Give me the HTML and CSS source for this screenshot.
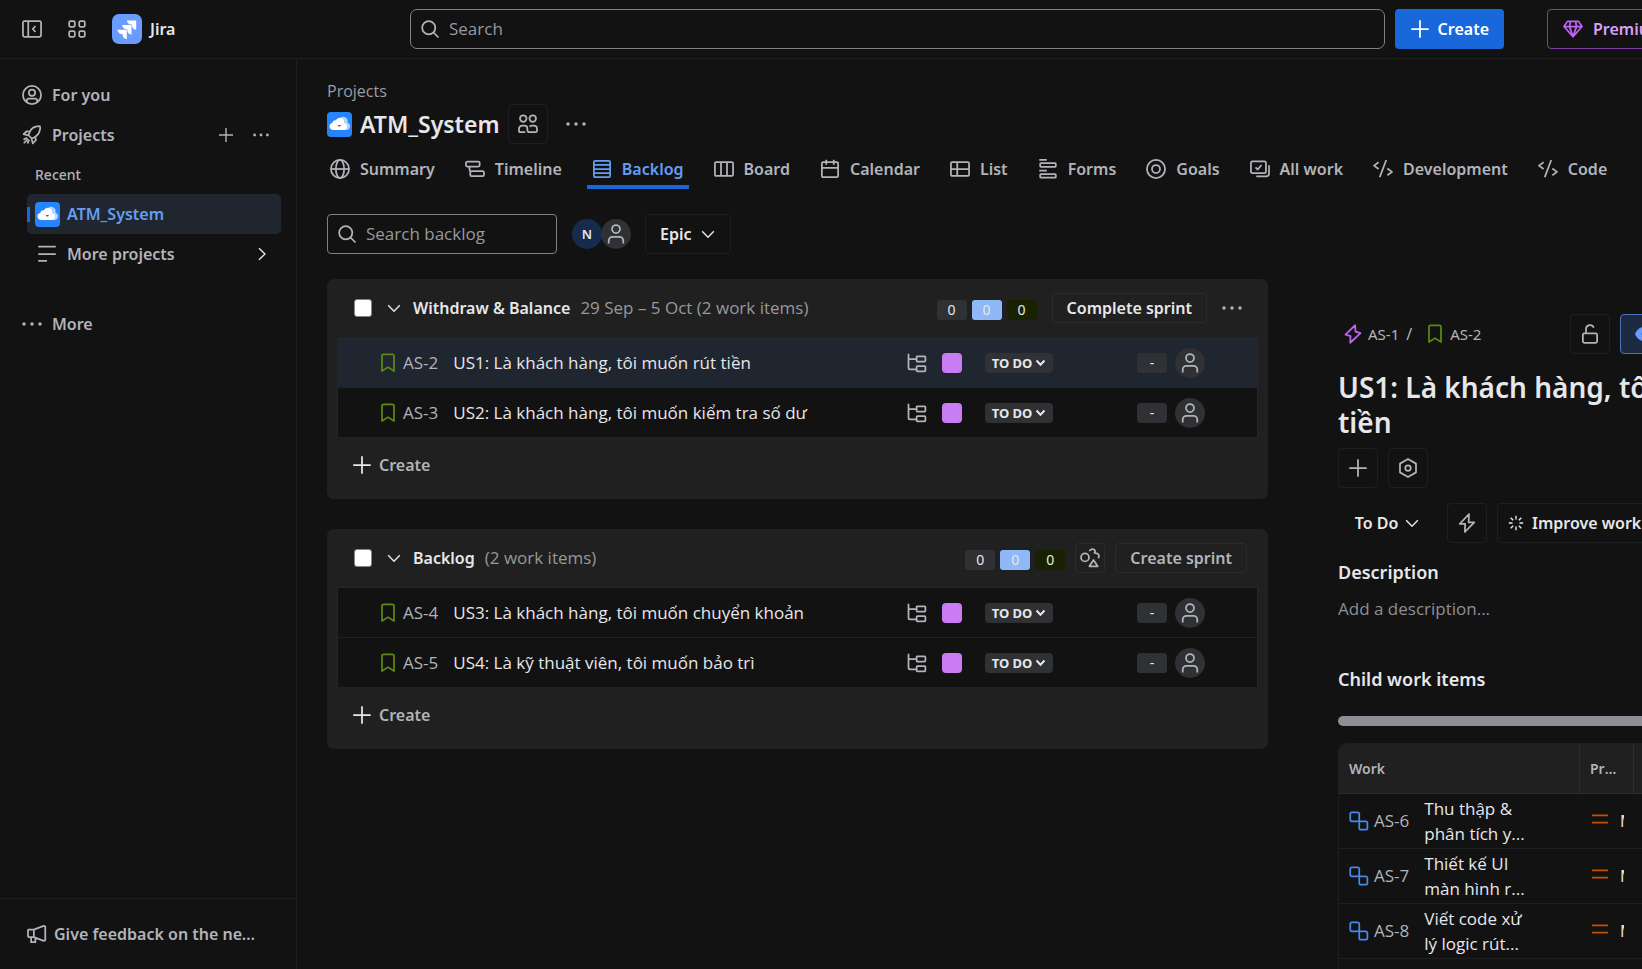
FILE: index.html
```html
<!DOCTYPE html>
<html lang="en">
<head>
<meta charset="utf-8">
<title>ATM_System - Backlog - Jira</title>
<link rel="stylesheet" href="styles.css">
</head>
<body>
<svg class="sprite" aria-hidden="true">
  <symbol id="i-collapse" viewBox="0 0 16 16"><rect x=".75" y="1.75" width="14.5" height="12.5" rx="1.2"/><path d="M5 2v12M10.8 5.6 8.6 8l2.2 2.4"/></symbol>
  <symbol id="i-apps" viewBox="0 0 16 16"><rect x="1.75" y="1.75" width="4.5" height="4.5" rx="1"/><rect x="9.75" y="1.75" width="4.5" height="4.5" rx="1"/><rect x="1.75" y="9.75" width="4.5" height="4.5" rx="1"/><rect x="9.75" y="9.75" width="4.5" height="4.5" rx="1"/></symbol>
  <symbol id="i-search" viewBox="0 0 16 16"><circle cx="7" cy="7" r="5.25"/><path d="m10.8 10.8 4 4"/></symbol>
  <symbol id="i-plus" viewBox="0 0 16 16"><path d="M8 1v14M1 8h14"/></symbol>
  <symbol id="i-dots" viewBox="0 0 16 16"><g fill="currentColor" stroke="none"><circle cx="1.6" cy="8" r="1.4"/><circle cx="8" cy="8" r="1.4"/><circle cx="14.4" cy="8" r="1.4"/></g></symbol>
  <symbol id="i-gem" viewBox="0 0 16 16"><path d="M3.6 1.9h8.8L15.2 6 8 14.2.8 6zM.8 6.1h14.4M5.2 6.1 8 14M10.8 6.1 8 14M5.2 6.1l.7-4M10.8 6.1l-.7-4"/></symbol>
  <symbol id="i-user-circle" viewBox="0 0 16 16"><circle cx="8" cy="8" r="7.25"/><circle cx="8" cy="6.2" r="2.5"/><path d="M3.8 13.6v-.9c0-1 .8-1.8 1.8-1.8h4.8c1 0 1.8.8 1.8 1.8v.9"/></symbol>
  <symbol id="i-rocket" viewBox="0 0 16 16"><path d="M5.2 8.200C6 5 8 2 11 1.300c1.200-.3 2.500-.4 3.400-.3.200 1.100.1 2.600-.3 3.800C13.300 7.600 10.600 9.800 7.800 10.800zM6.300 5.400 3.800 5 1.300 7.400l3.600.900M10.600 9.600l.500 2.600-2.500 2.500-.9-3.600M4.200 10.200l-3 1.500M5.800 11.800l-1.500 3M4.800 11.200l-3.400 3.400"/></symbol>
  <symbol id="i-lines" viewBox="0 0 16 16"><path d="M1 2h14M1 8h14M1 13.500h7"/></symbol>
  <symbol id="i-right" viewBox="0 0 16 16"><path d="m5 2.200 6 5.800-6 5.800"/></symbol>
  <symbol id="i-down" viewBox="0 0 16 16"><path d="M2.200 5.200 8 11.200l5.800-6"/></symbol>
  <symbol id="i-horn" viewBox="0 0 16 16"><path d="M1 4.500h4.500v6H1.700A.9.900 0 0 1 .8 9.600V5.200c0-.4.300-.7.700-.7zM5.500 4.500l7.800-3 1.300.5v11l-1.300.5-7.800-3M3.300 10.500v4h3.400v-3.300"/></symbol>
  <symbol id="i-people" viewBox="0 0 16 16"><circle cx="4.200" cy="3.600" r="2.600"/><circle cx="11.800" cy="3.600" r="2.600"/><path d="M.8 14.500v-2.200C.8 10.600 2 9.300 3.600 9.300h1.600c1.600 0 2.300 1 2.300 2.600v.8c0 1 .7 1.800 1.700 1.800h4.800c.7 0 1.200-.5 1.200-1.200v-1.400c0-1.600-1.200-2.600-2.800-2.600h-1c-1 0-1.600.3-2.100.9M.8 14.500h5"/></symbol>
  <symbol id="i-globe" viewBox="0 0 16 16"><circle cx="8" cy="8" r="7.250"/><ellipse cx="8" cy="8" rx="3.300" ry="7.250"/><path d="M.8 8h14.400"/></symbol>
  <symbol id="i-timeline" viewBox="0 0 16 16"><rect x=".75" y="2" width="11" height="4" rx="1.200"/><rect x="4.200" y="9.700" width="11" height="4" rx="1.200"/><path d="M3.600 6v2.600c0 .7.500 1.100 1.100 1.100"/></symbol>
  <symbol id="i-backlog" viewBox="0 0 16 16"><rect x="1.500" y="1.500" width="13" height="13" rx="1"/><path d="M1.500 4.700h13M1.500 8h13M1.500 11.300h13"/></symbol>
  <symbol id="i-board" viewBox="0 0 16 16"><rect x=".75" y="2.500" width="14.500" height="11" rx="1"/><path d="M5.600 2.500v11M10.400 2.500v11"/></symbol>
  <symbol id="i-calendar" viewBox="0 0 16 16"><rect x="1.500" y="2.500" width="13" height="12" rx="1"/><path d="M1.500 7h13M5 .5v4M11 .5v4"/></symbol>
  <symbol id="i-list" viewBox="0 0 16 16"><rect x=".75" y="2.500" width="14.500" height="11" rx="1"/><path d="M.75 8h14.500M5.800 2.500v11"/></symbol>
  <symbol id="i-forms" viewBox="0 0 16 16"><path d="M1 .75h6M1 9.200h6"/><rect x="1.750" y="3.300" width="12.500" height="2.900" rx=".6"/><rect x="1.750" y="12" width="12.500" height="2.900" rx=".6"/></symbol>
  <symbol id="i-goals" viewBox="0 0 16 16"><circle cx="8" cy="8" r="7.250"/><circle cx="8" cy="8" r="3.200"/></symbol>
  <symbol id="i-allwork" viewBox="0 0 16 16"><rect x=".75" y="1.800" width="12" height="9.500" rx="1.200"/><path d="m4.400 6.700 1.800 1.700 3-3.600M15.200 5v6.500c0 1.300-1 2.300-2.300 2.300H5"/></symbol>
  <symbol id="i-code" viewBox="0 0 16 16"><path d="M4.500 2.600.8 5.300l3.700 2.700M11.500 7.600l3.700 2.700-3.700 2.700M10.600.8 5.400 14.500"/></symbol>
  <symbol id="i-person" viewBox="0 0 16 16"><circle cx="8" cy="4" r="3.200"/><path d="M2.200 15.500v-2.300c0-1.700 1.300-3 3-3h5.600c1.700 0 3 1.300 3 3v2.300"/></symbol>
  <symbol id="i-story" viewBox="0 0 16 16"><path d="M3.200 14.400V2.300c0-.8.600-1.300 1.300-1.300h7c.7 0 1.300.5 1.300 1.300v12.100L8 11.300z"/></symbol>
  <symbol id="i-tree" viewBox="0 0 16 16"><path d="M1.200.6v11.200c0 .8.500 1.300 1.300 1.300h5M1.500 4.800h6"/><rect x="7.700" y="2.600" width="7" height="4.200" rx=".6"/><rect x="7.700" y="10.400" width="7" height="4.200" rx=".6"/></symbol>
  <symbol id="i-shapes" viewBox="0 0 16 16"><circle cx="4" cy="7.500" r="3.200"/><path d="M7.500 2.500C8.600.6 11 .4 11.800 1.800c.4.800.2 1.800-.6 2.400M12.300 4c2.600 0 3.400 2 2.400 4.200M10.800 9.600l3.300 5H7.500z"/></symbol>
  <symbol id="i-epic" viewBox="0 0 16 16"><path d="M9.700 1 2 8.500l4 1.200L5.800 15 14 7.300 10 6.100z"/></symbol>
  <symbol id="i-bolt" viewBox="0 0 16 16"><path d="M9.600.8 2.200 8.700h4.300L6.300 15.200l7.500-7.700H9.300z"/></symbol>
  <symbol id="i-unlock" viewBox="0 0 16 16"><rect x="2.300" y="7.500" width="11.400" height="7.500" rx="1.200"/><path d="M4.800 7.500V4A3.200 3.200 0 0 1 11 3"/></symbol>
  <symbol id="i-eye" viewBox="0 0 16 16"><path fill="currentColor" stroke="none" d="M8 2C4 2 1.300 5 0 8c1.300 3 4 6 8 6s6.700-3 8-6c-1.300-3-4-6-8-6z"/><circle cx="8" cy="8" r="2.600" fill="#1c2b41" stroke="none"/></symbol>
  <symbol id="i-hex" viewBox="0 0 16 16"><path d="M8 .8 14.400 4.500v7L8 15.200 1.600 11.500v-7z"/><circle cx="8" cy="8" r="2.200"/></symbol>
  <symbol id="i-spark" viewBox="0 0 16 16"><path d="M8 .8v3.700M8 11.500v3.700M.8 8h3.700M11.500 8h3.700M2.700 2.700l2.500 2.500M10.800 10.800l2.500 2.500M13.300 2.700l-2.500 2.500M5.200 10.800l-2.500 2.500"/></symbol>
  <symbol id="i-subtask" viewBox="0 0 16 16"><rect x="1" y="1" width="7.200" height="7.200" rx="1.400"/><path d="M8.200 8.200h5.100c.8 0 1.400.6 1.400 1.400v3.900c0 .8-.6 1.400-1.400 1.400H9.600c-.8 0-1.400-.6-1.400-1.400V8.200"/></symbol>
  <symbol id="i-medium" viewBox="0 0 16 16"><path d="M1.500 5h13M1.500 10.800h13"/></symbol>
  <symbol id="i-jira" viewBox="0 0 30 30"><g fill="#fff" stroke="none"><path id="jira-arm" d="M24.200 6.400h-9.300a4.200 4.200 0 0 0 4.200 4.200h.9v.9a4.200 4.200 0 0 0 4.200 4.200z"/><path d="M19.500 11.100h-9.300a4.200 4.200 0 0 0 4.200 4.200h.9v.9a4.200 4.200 0 0 0 4.200 4.200z"/><path d="M14.800 15.800H5.500a4.200 4.200 0 0 0 4.200 4.200h.9v.9a4.200 4.200 0 0 0 4.200 4.200z"/></g></symbol>
  <symbol id="i-cloud" viewBox="0 0 25 25"><g stroke="none"><rect width="25" height="25" rx="4" fill="#2684ff"/><path fill="#b3d4ff" d="M12 8.500A5 5 0 0 1 14.500 5a4.800 4.800 0 0 1 6.200 5.700 3.800 3.800 0 0 1-1 7.300H13z"/><path fill="#fff" d="M6.200 18a3.600 3.600 0 0 1-.9-7.100c.3-1.800 2-2.900 3.700-2.500C10 5.600 13.500 4.800 15.700 6.800c1.300 1.200 1.600 2.700 1.300 4.200 2.200.2 3.200 1.900 3 3.700-.2 2-1.600 3.300-3.400 3.300z"/><path fill="#de350b" d="M10.800 12.900h3c-.1 1.100-.7 1.600-1.500 1.600s-1.400-.5-1.500-1.600z"/><path fill="#b8bfca" d="M8.500 12h1v.6h-1zM15 12h1v.6h-1z"/></g></symbol>
</svg>

<header class="topbar">
  <div class="topbar-left">
    <button class="plain" aria-label="Collapse sidebar"><svg class="icon"><use href="#i-collapse"/></svg></button>
    <button class="plain" aria-label="Switch apps"><svg class="icon"><use href="#i-apps"/></svg></button>
    <a class="brand" href="#"><span class="brand-mark"><svg><use href="#i-jira"/></svg></span>Jira</a>
  </div>
  <label class="search global-search"><svg class="icon"><use href="#i-search"/></svg><input type="text" placeholder="Search" aria-label="Search"></label>
  <button class="primary"><svg class="icon"><use href="#i-plus"/></svg>Create</button>
  <div class="topbar-right"><button class="premium"><svg class="icon"><use href="#i-gem"/></svg>Premium trial</button></div>
</header>

<div class="shell">
  <nav class="sidebar" aria-label="Sidebar">
    <div class="side-list">
      <a class="side-item" href="#"><svg class="icon"><use href="#i-user-circle"/></svg>For you</a>
      <div class="side-item">
        <svg class="icon"><use href="#i-rocket"/></svg><a href="#">Projects</a>
        <span class="side-actions">
          <button class="plain" aria-label="Create project"><svg class="icon small"><use href="#i-plus"/></svg></button>
          <button class="plain" aria-label="More actions"><svg class="icon small"><use href="#i-dots"/></svg></button>
        </span>
      </div>
      <div class="side-label">Recent</div>
      <a class="side-item nested selected" href="#"><svg class="cloud"><use href="#i-cloud"/></svg>ATM_System</a>
      <a class="side-item nested" href="#"><svg class="icon boxed"><use href="#i-lines"/></svg>More projects<svg class="icon small bright end"><use href="#i-right"/></svg></a>
      <a class="side-item spaced" href="#"><svg class="icon"><use href="#i-dots"/></svg>More</a>
    </div>
    <a class="feedback" href="#"><svg class="icon"><use href="#i-horn"/></svg><span>Give feedback on the new navigation</span></a>
  </nav>

  <main class="content">
    <a class="crumb" href="#">Projects</a>
    <div class="title-row">
      <svg class="cloud"><use href="#i-cloud"/></svg>
      <h1>ATM_System</h1>
      <button class="square" aria-label="Team"><svg class="icon"><use href="#i-people"/></svg></button>
      <button class="plain more" aria-label="More actions"><svg class="icon"><use href="#i-dots"/></svg></button>
    </div>
    <nav class="tabs" aria-label="Project views">
      <a href="#"><svg class="icon"><use href="#i-globe"/></svg>Summary</a>
      <a href="#"><svg class="icon"><use href="#i-timeline"/></svg>Timeline</a>
      <a href="#" class="active" aria-current="page"><svg class="icon"><use href="#i-backlog"/></svg>Backlog</a>
      <a href="#"><svg class="icon"><use href="#i-board"/></svg>Board</a>
      <a href="#"><svg class="icon"><use href="#i-calendar"/></svg>Calendar</a>
      <a href="#"><svg class="icon"><use href="#i-list"/></svg>List</a>
      <a href="#"><svg class="icon"><use href="#i-forms"/></svg>Forms</a>
      <a href="#"><svg class="icon"><use href="#i-goals"/></svg>Goals</a>
      <a href="#"><svg class="icon"><use href="#i-allwork"/></svg>All work</a>
      <a href="#"><svg class="icon"><use href="#i-code"/></svg>Development</a>
      <a href="#"><svg class="icon"><use href="#i-code"/></svg>Code</a>
    </nav>
    <div class="filters">
      <label class="search backlog-search"><svg class="icon"><use href="#i-search"/></svg><input type="text" placeholder="Search backlog" aria-label="Search backlog"></label>
      <div class="avatars"><span class="avatar initial">N</span><span class="avatar"><svg class="icon"><use href="#i-person"/></svg></span></div>
      <button class="outline strong">Epic<svg class="icon small"><use href="#i-down"/></svg></button>
    </div>

    <div class="workspace">
      <div class="lists">
        <section class="panel">
          <div class="panel-head">
            <input type="checkbox" aria-label="Select all in Withdraw &amp; Balance">
            <button class="plain bright" aria-label="Collapse sprint"><svg class="icon small"><use href="#i-down"/></svg></button>
            <h2>Withdraw &amp; Balance</h2>
            <span class="meta">29 Sep – 5 Oct (2 work items)</span>
            <span class="counts"><span class="badge">0</span><span class="badge blue">0</span><span class="badge green">0</span></span>
            <button class="outline short strong">Complete sprint</button>
            <button class="plain more" aria-label="Sprint actions"><svg class="icon"><use href="#i-dots"/></svg></button>
          </div>
          <div class="rows">
            <div class="row picked">
              <svg class="icon story"><use href="#i-story"/></svg><a class="key" href="#">AS-2</a><span class="summary">US1: Là khách hàng, tôi muốn rút tiền</span>
              <svg class="icon"><use href="#i-tree"/></svg><span class="swatch"></span><button class="status">TO DO<svg class="tiny"><use href="#i-down"/></svg></button><span class="badge points">-</span><span class="avatar"><svg class="icon"><use href="#i-person"/></svg></span>
            </div>
            <div class="row">
              <svg class="icon story"><use href="#i-story"/></svg><a class="key" href="#">AS-3</a><span class="summary">US2: Là khách hàng, tôi muốn kiểm tra số dư</span>
              <svg class="icon"><use href="#i-tree"/></svg><span class="swatch"></span><button class="status">TO DO<svg class="tiny"><use href="#i-down"/></svg></button><span class="badge points">-</span><span class="avatar"><svg class="icon"><use href="#i-person"/></svg></span>
            </div>
          </div>
          <button class="create"><svg class="icon"><use href="#i-plus"/></svg>Create</button>
        </section>

        <section class="panel">
          <div class="panel-head">
            <input type="checkbox" aria-label="Select all in Backlog">
            <button class="plain bright" aria-label="Collapse backlog"><svg class="icon small"><use href="#i-down"/></svg></button>
            <h2>Backlog</h2>
            <span class="meta">(2 work items)</span>
            <span class="counts"><span class="badge">0</span><span class="badge blue">0</span><span class="badge green">0</span></span>
            <button class="square mini" aria-label="Estimate"><svg class="icon"><use href="#i-shapes"/></svg></button>
            <button class="outline short last">Create sprint</button>
          </div>
          <div class="rows">
            <div class="row">
              <svg class="icon story"><use href="#i-story"/></svg><a class="key" href="#">AS-4</a><span class="summary">US3: Là khách hàng, tôi muốn chuyển khoản</span>
              <svg class="icon"><use href="#i-tree"/></svg><span class="swatch"></span><button class="status">TO DO<svg class="tiny"><use href="#i-down"/></svg></button><span class="badge points">-</span><span class="avatar"><svg class="icon"><use href="#i-person"/></svg></span>
            </div>
            <div class="row">
              <svg class="icon story"><use href="#i-story"/></svg><a class="key" href="#">AS-5</a><span class="summary">US4: Là kỹ thuật viên, tôi muốn bảo trì</span>
              <svg class="icon"><use href="#i-tree"/></svg><span class="swatch"></span><button class="status">TO DO<svg class="tiny"><use href="#i-down"/></svg></button><span class="badge points">-</span><span class="avatar"><svg class="icon"><use href="#i-person"/></svg></span>
            </div>
          </div>
          <button class="create"><svg class="icon"><use href="#i-plus"/></svg>Create</button>
        </section>
      </div>

      <aside class="detail" aria-label="Work item details">
        <div class="detail-inner">
          <div class="detail-head">
            <svg class="icon epic"><use href="#i-epic"/></svg><a href="#">AS-1</a><span class="slash">/</span>
            <svg class="icon story"><use href="#i-story"/></svg><a href="#">AS-2</a>
            <button class="square lock" aria-label="Restrict"><svg class="icon"><use href="#i-unlock"/></svg></button>
            <button class="watch" aria-label="Watch"><svg class="icon"><use href="#i-eye"/></svg>1</button>
          </div>
          <h2 class="detail-title">US1: Là khách hàng, tôi muốn rút tiền</h2>
          <div class="tools">
            <button class="square" aria-label="Add"><svg class="icon"><use href="#i-plus"/></svg></button>
            <button class="square" aria-label="Apps"><svg class="icon"><use href="#i-hex"/></svg></button>
          </div>
          <div class="tools second">
            <button class="state">To Do<svg class="icon small"><use href="#i-down"/></svg></button>
            <button class="square" aria-label="Automation"><svg class="icon"><use href="#i-bolt"/></svg></button>
            <button class="outline strong improve"><svg class="icon small"><use href="#i-spark"/></svg>Improve work item</button>
          </div>
          <h3>Description</h3>
          <p class="hint">Add a description...</p>
          <h3 class="children">Child work items</h3>
          <div class="progress" role="progressbar" aria-label="Done" aria-valuenow="0"></div>
          <table>
            <thead><tr><th class="c-work">Work</th><th class="c-pr"><span class="clip">Priority</span></th><th></th></tr></thead>
            <tbody>
              <tr><td><div class="work"><svg class="icon sub"><use href="#i-subtask"/></svg><a class="key" href="#">AS-6</a><span class="name">Thu thập &amp;<br>phân tích y...</span></div></td><td><div class="prio"><svg class="icon"><use href="#i-medium"/></svg>Medium</div></td><td></td></tr>
              <tr><td><div class="work"><svg class="icon sub"><use href="#i-subtask"/></svg><a class="key" href="#">AS-7</a><span class="name">Thiết kế UI<br>màn hình r...</span></div></td><td><div class="prio"><svg class="icon"><use href="#i-medium"/></svg>Medium</div></td><td></td></tr>
              <tr><td><div class="work"><svg class="icon sub"><use href="#i-subtask"/></svg><a class="key" href="#">AS-8</a><span class="name">Viết code xử<br>lý logic rút...</span></div></td><td><div class="prio"><svg class="icon"><use href="#i-medium"/></svg>Medium</div></td><td></td></tr>
              <tr><td></td><td></td><td></td></tr>
            </tbody>
          </table>
        </div>
      </aside>
    </div>
  </main>
</div>
</body>
</html>
```

FILE: styles.css
```css
:root {
  --bg: #121212;
  --raised: #202020;
  --line: #1e1f20;
  --text: #e6e7ea;
  --subtle: #b2b4ba;
  --muted: #8c8f97;
  --selected: #1f262f;
  --blue: #669df1;
}

* { box-sizing: border-box; }

body {
  margin: 0;
  height: 100vh;
  display: flex;
  flex-direction: column;
  overflow: hidden;
  background: var(--bg);
  color: var(--subtle);
  font: 400 16px/24px "Noto Sans", "Open Sans", sans-serif;
}

.sprite { display: none; }
a { color: inherit; text-decoration: none; }
h1, h2, h3, p { margin: 0; }

button, input {
  font: inherit;
  color: inherit;
  background: none;
  border: 0;
  padding: 0;
  margin: 0;
}

button {
  display: inline-flex;
  align-items: center;
  justify-content: center;
  white-space: nowrap;
  flex: none;
}

/* Running text */
.search input, .meta, .key, .summary, .hint, .name, .crumb {
  font-family: "Open Sans", "Noto Sans", sans-serif;
  font-size: 17px;
}

.icon {
  width: 20px;
  height: 20px;
  flex: none;
  fill: none;
  stroke: currentColor;
  stroke-width: 1.4;
  stroke-linejoin: round;
}
.icon.small { width: 16px; height: 16px; }
.bright { color: var(--text); }
.story { color: #5b8a12; }
.epic { color: #bf63f3; }

/* Top bar */
.topbar {
  flex: none;
  height: 59px;
  display: flex;
  align-items: center;
  border-bottom: 1px solid var(--line);
  overflow: hidden;
}
.topbar-left {
  width: 410px;
  flex: none;
  display: flex;
  align-items: center;
  gap: 25px;
  padding-left: 22px;
}
.brand {
  display: flex;
  align-items: center;
  gap: 8px;
  color: var(--text);
  font-weight: 600;
}
.brand-mark {
  display: flex;
  width: 30px;
  height: 30px;
  border-radius: 7px;
  background: #6a9bff;
}
.brand-mark svg { width: 30px; height: 30px; }

.search {
  display: flex;
  align-items: center;
  gap: 9px;
  height: 40px;
  padding: 0 9px;
  border: 1px solid #7e8188;
}
.search input { flex: 1; min-width: 0; outline: 0; }
.search input::placeholder { color: #96999e; opacity: 1; }
.global-search { flex: 1; border-radius: 7px; }
.backlog-search { width: 230px; border-radius: 4px; }

.primary {
  height: 40px;
  margin-left: 10px;
  padding: 0 15px;
  gap: 8px;
  border-radius: 4px;
  background: #1868db;
  color: #fff;
  font-weight: 600;
}
.topbar-right { width: 138px; flex: none; padding-left: 43px; overflow: hidden; }
.premium {
  height: 40px;
  padding: 0 15px;
  gap: 10px;
  border: 1px solid #803fa5;
  border-radius: 4px;
  color: #d8a0f7;
  font-weight: 600;
}
.premium .icon { color: #bf63f3; }

/* Sidebar */
.shell { flex: 1; min-height: 0; display: flex; }
.sidebar {
  width: 297px;
  flex: none;
  display: flex;
  flex-direction: column;
  border-right: 1px solid var(--line);
  font-weight: 600;
}
.side-list { flex: 1; padding: 16px 15px 0 15px; }
.side-item {
  display: flex;
  align-items: center;
  gap: 10px;
  height: 40px;
  padding: 0 12px 0 7px;
  border-radius: 5px;
}
.side-actions { margin-left: auto; display: flex; gap: 19px; }
.side-label {
  padding: 9px 0 9px 20px;
  font-size: 14px;
  line-height: 21px;
  font-weight: 500;
}
.nested { margin-left: 12px; padding: 0 11px 0 8px; gap: 7px; }
.selected {
  background: linear-gradient(#1868db, #1868db) 0 50% / 3px 15px no-repeat var(--selected);
  color: var(--blue);
}
.boxed { margin: 0 3px 0 2px; }
.end { margin-left: auto; }
.spaced { margin-top: 30px; }
.cloud { width: 25px; height: 25px; flex: none; }
.feedback {
  display: flex;
  align-items: center;
  gap: 7px;
  height: 71px;
  padding: 0 32px 0 27px;
  border-top: 1px solid var(--line);
}
.feedback span { overflow: hidden; white-space: nowrap; text-overflow: ellipsis; }

/* Content header */
.content {
  flex: 1;
  min-width: 0;
  display: flex;
  flex-direction: column;
  padding: 20px 0 0 30px;
  overflow: hidden;
}
.crumb { font-size: 16px; color: #9a9da3; }
.title-row { display: flex; align-items: center; height: 40px; margin-top: 1px; }
h1 {
  margin: 0 8px;
  color: var(--text);
  font-size: 23px;
  line-height: 32px;
  font-weight: 600;
}
.square {
  width: 40px;
  height: 40px;
  border: 1px solid var(--line);
  border-radius: 4px;
}
.square.mini { width: 30px; height: 30px; border-color: #2a2b2c; }
.title-row .more { margin-left: 18px; }

.tabs { display: flex; gap: 20px; margin: 4px 0 0 -2px; }
.tabs a {
  display: flex;
  align-items: center;
  gap: 10px;
  height: 41px;
  padding: 5px 5px 0;
  border-bottom: 4px solid transparent;
  font-weight: 600;
  white-space: nowrap;
}
.tabs .active { color: var(--blue); border-color: #1868db; }

.filters { display: flex; align-items: center; margin-top: 25px; }
.avatars { display: flex; gap: 1px; margin: 0 14px 0 15px; }
.avatar {
  width: 30px;
  height: 30px;
  flex: none;
  display: flex;
  align-items: center;
  justify-content: center;
  border-radius: 50%;
  background: #303134;
}
.avatars .avatar + .avatar { margin-left: -2px; }
.avatar.initial {
  background: #172b4d;
  color: var(--text);
  font-size: 13px;
  font-weight: 600;
}
.outline {
  height: 40px;
  padding: 0 14px;
  gap: 8px;
  border: 1px solid var(--line);
  border-radius: 4px;
  font-weight: 600;
}
.strong { color: var(--text); }
.outline.short { height: 30px; border-color: #2a2b2c; }

/* Lists */
.workspace { flex: 1; min-height: 0; display: flex; gap: 70px; padding-top: 25px; }
.lists { flex: 1; min-width: 0; display: flex; flex-direction: column; gap: 30px; }
.panel { padding: 0 10px 7px; border-radius: 7px; background: var(--raised); }
.panel-head { display: flex; align-items: center; height: 58px; padding: 0 16px 0 17px; }
.panel-head input {
  appearance: none;
  width: 18px;
  height: 18px;
  margin: 0 14px 0 0;
  flex: none;
  border: 1px solid #85858a;
  border-radius: 3px;
  background: #fff;
}
.panel-head h2 {
  margin: 0 10px 0 11px;
  color: var(--text);
  font-size: 16px;
  line-height: 24px;
  font-weight: 600;
  white-space: nowrap;
}
.meta { color: #96999e; white-space: nowrap; }
.counts { display: flex; gap: 5px; margin: 4px 15px 0 auto; }
.counts:has(+ .mini) { margin-right: 10px; }
.badge {
  width: 30px;
  height: 20px;
  display: flex;
  align-items: center;
  justify-content: center;
  border-radius: 3px;
  background: #303134;
  color: var(--text);
  font-size: 14px;
  line-height: 20px;
}
.badge.blue { background: #8fb8f6; }
.badge.green { background: #182200; }
.panel-head .more { margin-left: 15px; }
.panel-head .mini { margin-right: 10px; }
.panel-head .last { margin-right: -5px; }

.rows { border: 1px solid #242628; border-width: 1px 1px 0; background: var(--bg); }
.row {
  display: flex;
  align-items: center;
  height: 50px;
  padding: 0 52px 0 40px;
  border-bottom: 1px solid #202122;
}
.row.picked { background: var(--selected); }
.key { margin-left: 5px; white-space: nowrap; }
.summary {
  flex: 1;
  min-width: 0;
  margin-left: 15px;
  color: var(--text);
  white-space: nowrap;
  overflow: hidden;
  text-overflow: ellipsis;
}
.swatch {
  width: 20px;
  height: 20px;
  margin: 0 23px 0 15px;
  border-radius: 4px;
  background: #c97cf4;
}
.status {
  width: 68px;
  height: 20px;
  margin-right: 84px;
  gap: 3px;
  border-radius: 4px;
  background: #303134;
  color: var(--text);
  font-size: 13px;
  font-weight: 700;
}
.tiny { width: 11px; height: 11px; fill: none; stroke: currentColor; stroke-width: 3; }
.points { margin-right: 8px; }
.create { height: 54px; margin-left: 15px; gap: 7px; font-weight: 600; }
.create .icon { color: var(--text); }

/* Detail pane */
.detail { width: 304px; flex: none; overflow: hidden; padding-top: 35px; }
.detail-inner { width: 480px; }
.detail-head { display: flex; align-items: center; height: 40px; padding-left: 5px; gap: 5px; font-size: 15px; }
.slash { margin: 0 8px 0 2px; font-size: 16px; }
.lock { margin: 0 5px 0 84px; }
.watch {
  height: 40px;
  padding: 0 14px;
  gap: 8px;
  border: 1px solid #4a74b8;
  border-radius: 4px;
  background: #1c2b41;
  color: #669dff;
}
.detail-title {
  margin-top: 16px;
  color: var(--text);
  font-size: 28px;
  line-height: 35px;
  font-weight: 600;
}
.tools { display: flex; gap: 10px; margin-top: 8px; }
.tools.second { margin-top: 15px; }
.state { width: 99px; gap: 6px; color: var(--text); font-weight: 600; }
.improve { padding: 0 10px; }
.detail h3 {
  margin-top: 17px;
  color: var(--text);
  font-size: 18px;
  line-height: 24px;
  font-weight: 600;
}
.hint { margin-top: 13px; color: var(--muted); }
.detail .children { margin-top: 46px; }
.progress { height: 10px; margin: 25px 0 17px; border-radius: 5px; background: #8c8f97; }

table {
  width: 100%;
  table-layout: fixed;
  border-collapse: separate;
  border-spacing: 0;
  border: 1px solid var(--line);
  border-radius: 9px 9px 0 0;
  overflow: hidden;
}
th {
  height: 50px;
  padding: 0 10px;
  background: var(--raised);
  border-right: 1px solid #2b2c2e;
  border-bottom: 1px solid #2b2c2e;
  font-size: 14px;
  font-weight: 600;
  text-align: left;
}
.c-work { width: 241px; }
.c-pr { width: 54px; padding-right: 14px; }
.clip { display: block; overflow: hidden; white-space: nowrap; text-overflow: ellipsis; }
td { height: 55px; padding: 0 10px; border-bottom: 1px solid var(--line); }
.work { display: flex; align-items: center; }
.sub { color: #4688ec; }
.name { margin-left: 15px; line-height: 25px; color: var(--text); }
.prio { display: flex; gap: 10px; overflow: hidden; color: var(--text); }
.prio .icon { color: #c25100; }
```
